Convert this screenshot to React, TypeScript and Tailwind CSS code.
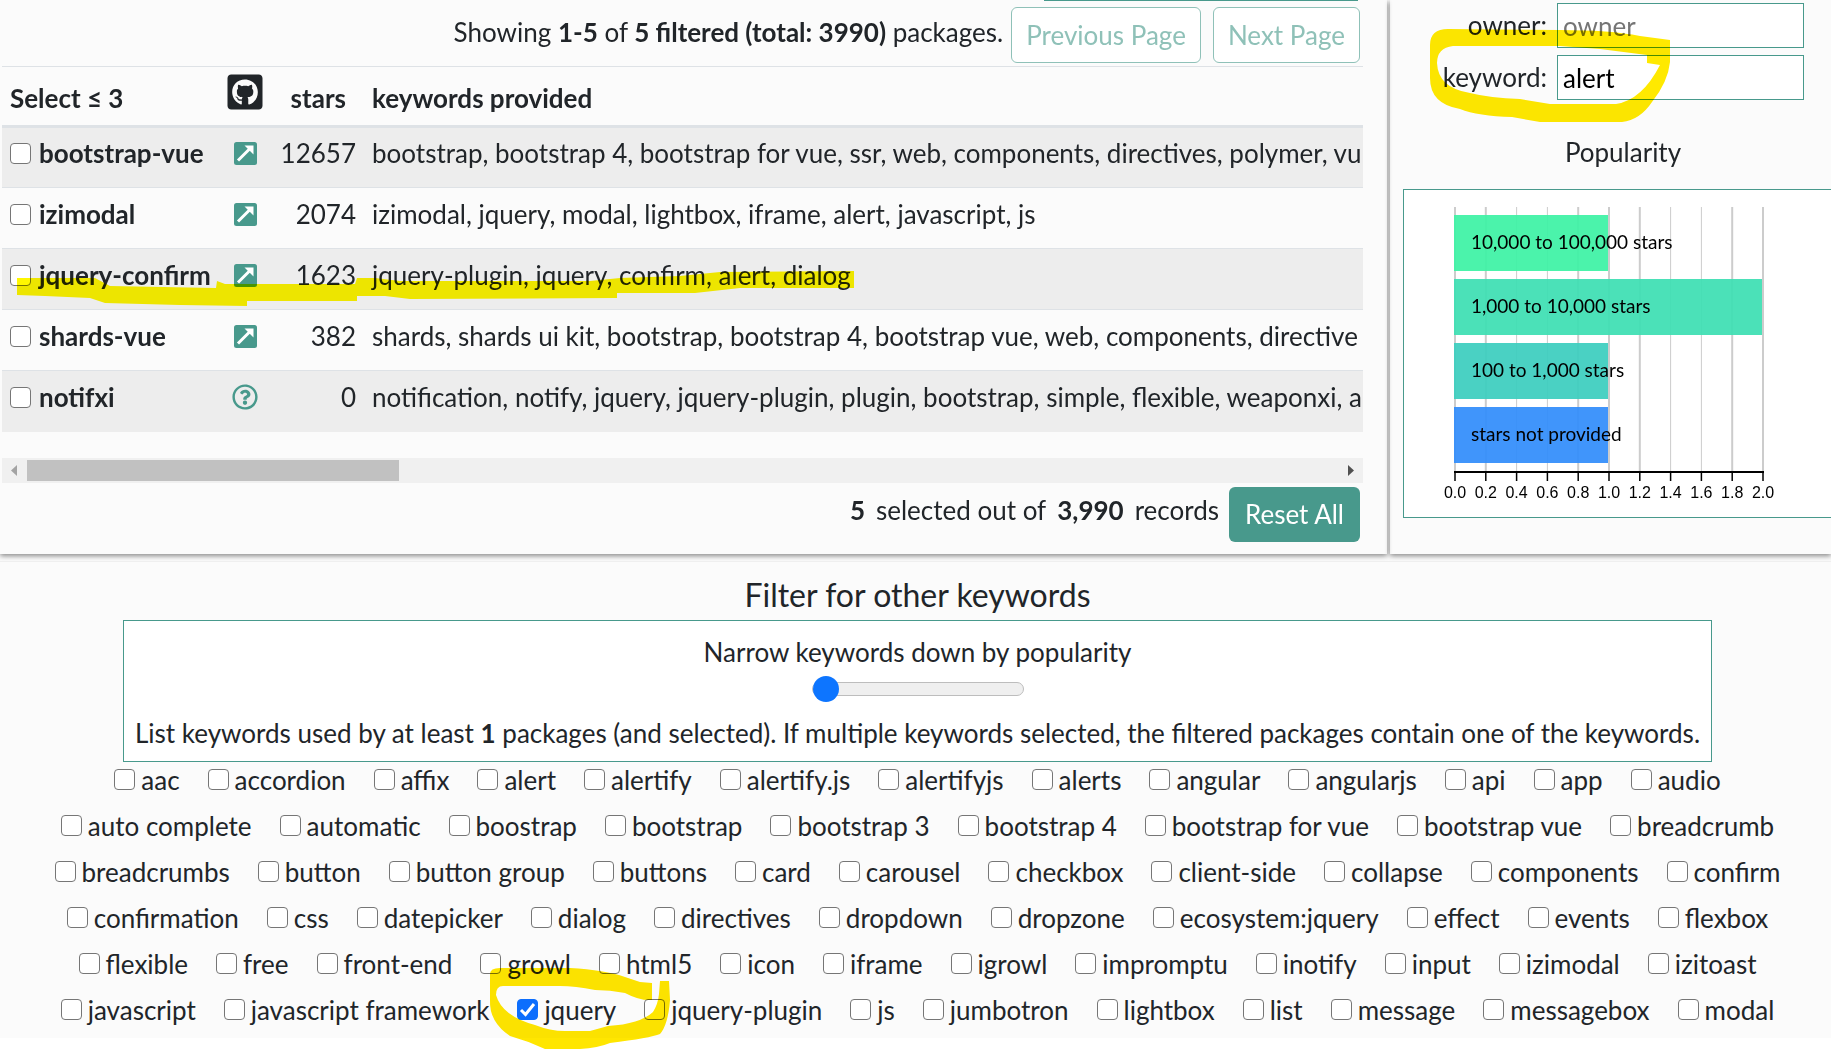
import { useState } from "react";
import { FaGithubSquare, FaRegQuestionCircle } from "react-icons/fa";

const packages = [
  { name: "bootstrap-vue", stars: 12657, linked: true, keywords: "bootstrap, bootstrap 4, bootstrap for vue, ssr, web, components, directives, polymer, vu" },
  { name: "izimodal", stars: 2074, linked: true, keywords: "izimodal, jquery, modal, lightbox, iframe, alert, javascript, js" },
  { name: "jquery-confirm", stars: 1623, linked: true, keywords: "jquery-plugin, jquery, confirm, alert, dialog" },
  { name: "shards-vue", stars: 382, linked: true, keywords: "shards, shards ui kit, bootstrap, bootstrap 4, bootstrap vue, web, components, directive" },
  { name: "notifxi", stars: 0, linked: false, keywords: "notification, notify, jquery, jquery-plugin, plugin, bootstrap, simple, flexible, weaponxi, a" },
];

const keywords = [
  "aac", "accordion", "affix", "alert", "alertify", "alertify.js", "alertifyjs", "alerts", "angular", "angularjs", "api", "app", "audio",
  "auto complete", "automatic", "boostrap", "bootstrap", "bootstrap 3", "bootstrap 4", "bootstrap for vue", "bootstrap vue", "breadcrumb",
  "breadcrumbs", "button", "button group", "buttons", "card", "carousel", "checkbox", "client-side", "collapse", "components", "confirm",
  "confirmation", "css", "datepicker", "dialog", "directives", "dropdown", "dropzone", "ecosystem:jquery", "effect", "events", "flexbox",
  "flexible", "free", "front-end", "growl", "html5", "icon", "iframe", "igrowl", "impromptu", "inotify", "input", "izimodal", "izitoast",
  "javascript", "javascript framework", "jquery", "jquery-plugin", "js", "jumbotron", "lightbox", "list", "message", "messagebox", "modal",
];

const bars = [
  { label: "10,000 to 100,000 stars", value: 1, color: "#3df2a5" },
  { label: "1,000 to 10,000 stars", value: 2, color: "#3ddfb3" },
  { label: "100 to 1,000 stars", value: 1, color: "#3ccdbe" },
  { label: "stars not provided", value: 1, color: "#328dfb" },
];

const checkboxClass =
  "peer size-[21px] appearance-none rounded border border-[#767676] bg-white checked:border-[#0d6efd] checked:bg-[#0d6efd]";

function Checkbox({ id, defaultChecked }: { id: string; defaultChecked?: boolean }) {
  return (
    <span className="relative flex shrink-0">
      <input id={id} type="checkbox" defaultChecked={defaultChecked} className={checkboxClass} />
      <svg viewBox="0 0 21 21" className="pointer-events-none absolute inset-0 hidden size-[21px] peer-checked:block" fill="none" stroke="white" strokeWidth="3">
        <path d="M4 11 L8.5 15.5 L17 5" />
      </svg>
    </span>
  );
}

function LinkIcon() {
  return (
    <svg viewBox="0 0 23 23" className="size-[23px]" aria-hidden="true">
      <rect width="23" height="23" rx="2.5" fill="#48998c" />
      <path d="M4 18.5 L15.5 7" stroke="white" strokeWidth="3" />
      <path d="M10.5 3.5 H19.5 V12.5 L16.5 9.5 L13.5 6.5 Z" fill="white" />
    </svg>
  );
}

function PackageTable() {
  return (
    <div className="overflow-hidden">
      <table className="w-full table-fixed border-collapse text-left whitespace-nowrap">
        <colgroup>
          <col className="w-[219px]" />
          <col className="w-[48px]" />
          <col className="w-[95px]" />
          <col />
        </colgroup>
        <thead>
          <tr className="h-[60px] border-t border-b-[3px] border-t-[#dee2e6] border-b-[#dee2e6]">
            <th className="pt-1 pl-2 font-bold">Select ≤ 3</th>
            <th>
              <FaGithubSquare className="mx-auto mb-2 size-10" aria-label="GitHub" />
            </th>
            <th className="pt-1 pr-[18px] text-right">stars</th>
            <th className="pt-1 pl-2">keywords provided</th>
          </tr>
        </thead>
        <tbody>
          {packages.map((p) => (
            <tr key={p.name} className="h-[61px] border-t border-[#dee2e6] odd:bg-[#ededed]">
              <th className="pb-2 pl-2">
                <span className="flex items-center gap-2">
                  <Checkbox id={`package-${p.name}`} />
                  <label htmlFor={`package-${p.name}`}>{p.name}</label>
                </span>
              </th>
              <td className="pb-2">
                {p.linked ? (
                  <a href="#repository" aria-label={`${p.name} repository`} className="flex justify-center">
                    <LinkIcon />
                  </a>
                ) : (
                  <FaRegQuestionCircle className="mx-auto size-[26px] text-[#48998c]" />
                )}
              </td>
              <td className="pr-2 pb-2 text-right">{p.stars}</td>
              <td className="pb-2 pl-2">{p.keywords}</td>
            </tr>
          ))}
        </tbody>
      </table>
    </div>
  );
}

function ScrollTrack() {
  return (
    <div className="mt-[26px] flex h-[25px] items-center bg-[#f0f0f0]">
      <svg viewBox="0 0 25 25" className="size-[25px]" aria-hidden="true">
        <path d="M15 7 V18 L9 12.5 Z" fill="#a3a3a3" />
      </svg>
      <div className="h-[21px] flex-1">
        <div className="h-full w-[372px] bg-[#c1c1c1]" />
      </div>
      <svg viewBox="0 0 25 25" className="size-[25px]" aria-hidden="true">
        <path d="M10 7 V18 L16 12.5 Z" fill="#505050" />
      </svg>
    </div>
  );
}

function PopularityChart() {
  const ticks = Array.from({ length: 11 }, (_, i) => i);
  return (
    <svg width="400" height="327" viewBox="0 0 400 327" className="block" role="img" aria-label="Packages by number of stars">
      {ticks.map((i) => (
        <line key={i} x1={51 + i * 30.8} x2={51 + i * 30.8} y1="17" y2="282" stroke="#cccccc" strokeWidth={[2, 3, 7, 8].includes(i) ? 1 : 2} />
      ))}
      {bars.map((b, i) => (
        <g key={b.label}>
          <rect x="50" y={25 + i * 64} width={b.value * 154} height="56" fill={b.color} fillOpacity="0.93" />
          <text x="67" y={59 + i * 64} fontSize="19" fill="#000" className="font-['Lato',sans-serif]">
            {b.label}
          </text>
        </g>
      ))}
      <line x1="50" x2="360" y1="282" y2="282" stroke="#000" strokeWidth="2" />
      {ticks.map((i) => (
        <g key={i}>
          <line x1={51 + i * 30.8} x2={51 + i * 30.8} y1="282" y2="291" stroke="#000" strokeWidth="1.5" />
          <text x={51 + i * 30.8} y="308" textAnchor="middle" fontSize="16" fill="#000" className="font-['Liberation_Sans',sans-serif]">
            {(i * 0.2).toFixed(1)}
          </text>
        </g>
      ))}
    </svg>
  );
}

function Marker({ className, viewBox, d, color }: { className: string; viewBox: string; d: string; color: string }) {
  return (
    <svg viewBox={viewBox} className={className} aria-hidden="true">
      <path d={d} fill={color} fillRule="evenodd" />
    </svg>
  );
}

export default function App() {
  const [owner, setOwner] = useState("");
  const [keyword, setKeyword] = useState("alert");
  const inputClass =
    "h-[45px] min-w-0 flex-1 border border-[#48998c] bg-white px-[5px] text-black placeholder:text-[#757575]";
  const pageButtonClass = "h-[56px] rounded-md border border-[#8fc1b8] bg-white px-3.5 text-[#8fc1b8]";

  return (
    <div className="relative isolate min-h-screen bg-white font-['Lato',sans-serif] text-[26px] leading-[39px] text-[#212529]">
      <main className="bg-[#fbfbfb]">
        <div className="flex items-stretch gap-[3px]">
          <section className="min-w-0 flex-1 pr-6 pb-3 pl-0.5 shadow-[0_2px_5px_rgba(0,0,0,0.45)]">
            <div className="flex h-[66px] items-start justify-end pr-[3px]">
              <p className="mt-[13px] mr-2">
                Showing <b>1-5</b> of <b>5 filtered (total: 3990)</b> packages.
              </p>
              <div className="flex gap-3 pt-[7px]">
                <button type="button" className={pageButtonClass}>Previous Page</button>
                <button type="button" className={pageButtonClass}>Next Page</button>
              </div>
            </div>
            <PackageTable />
            <ScrollTrack />
            <div className="mt-1 flex items-start justify-end pr-[3px]">
              <p className="mt-1 mr-2.5 flex gap-[11px]">
                <b>5</b>
                <span>selected out of</span>
                <b>3,990</b>
                <span>records</span>
              </p>
              <button type="button" className="h-[55px] rounded-md bg-[#48998c] px-4 text-white">Reset All</button>
            </div>
          </section>

          <section className="relative w-[441px] shrink-0 overflow-hidden shadow-[0_2px_5px_rgba(0,0,0,0.45)]">
            <div className="flex flex-col gap-[7px] pt-[3px] pr-[27px] pl-[46px]">
              <div className="flex items-center gap-2.5">
                <label htmlFor="owner" className="w-[111px] text-right">owner:</label>
                <input id="owner" type="text" placeholder="owner" value={owner} onChange={(e) => setOwner(e.target.value)} className={inputClass} />
              </div>
              <div className="flex items-center gap-2.5">
                <label htmlFor="keyword" className="w-[111px] text-right">keyword:</label>
                <input id="keyword" type="text" value={keyword} onChange={(e) => setKeyword(e.target.value)} className={inputClass} />
              </div>
            </div>
            <h2 className="mt-[33px] pl-[25px] text-center">Popularity</h2>
            <div className="mt-[17px] -mr-1 ml-[13px] overflow-hidden border border-[#48998c] bg-white">
              <PopularityChart />
            </div>
            <Marker
              className="pointer-events-none absolute top-[28px] left-[38px] h-[96px] w-[242px] mix-blend-multiply"
              viewBox="1428 28 242 96"
              color="#ffe900"
              d="M1430 45 Q1430 29 1448 29 L1560 30 Q1610 30 1640 36 L1670 40 L1670 62 Q1668 82 1652 102 Q1640 120 1622 122 L1540 122 L1512 117 Q1478 116 1460 109 Q1430 104 1430 78 Z M1453 46 Q1437 48 1437 63 Q1438 88 1470 93 Q1490 98 1520 99 L1550 104 L1616 104 Q1642 100 1660 65 L1647 63 L1647 55 L1600 49 L1560 46 Z"
            />
          </section>
          <div className="absolute top-0 right-[473px] h-px w-[314px] bg-[#48998c]" />
        </div>

        <section className="relative mt-[7px] border-t border-[#efefef] bg-[#fbfbfb] pr-5 pb-2.5 pl-6">
          <h2 className="pt-2.5 pb-0.5 text-center text-[32px] leading-[46px]">Filter for other keywords</h2>
          <div className="flex justify-center">
            <div className="flex flex-col items-center border border-[#48998c] bg-white px-[11px] pt-3 pb-2">
              <label htmlFor="popularity">Narrow keywords down by popularity</label>
              <input
                id="popularity"
                type="range"
                min={1}
                max={100}
                defaultValue={1}
                className="mt-1 h-[26px] w-[212px] appearance-none bg-transparent [&::-webkit-slider-runnable-track]:h-[14px] [&::-webkit-slider-runnable-track]:rounded-full [&::-webkit-slider-runnable-track]:border [&::-webkit-slider-runnable-track]:border-[#bdbdbd] [&::-webkit-slider-runnable-track]:bg-[#efefef] [&::-webkit-slider-thumb]:-mt-[7px] [&::-webkit-slider-thumb]:size-[26px] [&::-webkit-slider-thumb]:appearance-none [&::-webkit-slider-thumb]:rounded-full [&::-webkit-slider-thumb]:bg-[#0d75ff]"
              />
              <p className="mt-3">
                List keywords used by at least <b>1</b> packages (and selected). If multiple keywords selected, the filtered packages contain one of the keywords.
              </p>
            </div>
          </div>
          <ul className="flex flex-wrap justify-center gap-x-[28px] gap-y-2.5 leading-9">
            {keywords.map((k) => (
              <li key={k} className="flex h-9 items-center gap-1.5">
                <Checkbox id={`keyword-${k}`} defaultChecked={k === "jquery"} />
                <label htmlFor={`keyword-${k}`}>{k}</label>
              </li>
            ))}
          </ul>
        </section>
      </main>
      <Marker
        className="pointer-events-none absolute top-[967px] left-[489px] h-[83px] w-[182px] mix-blend-multiply"
        viewBox="489 967 182 83"
        color="#ffe600"
        d="M490 974 Q490 968 500 968 L570 968 Q605 970 625 977 L640 982 L652 983 L652 1000 Q640 1001 625 993 Q610 990 595 990 Q575 986 560 986 L503 986 Q496 986 496 995 Q502 1016 535 1025 Q550 1031 565 1031 L590 1031 L608 1026 Q640 1024 653 1012 Q658 1004 659 994 L660 981 L669 981 L670 1000 Q668 1025 660 1034 Q650 1038 610 1043 Q598 1048 580 1049 L545 1049 Q528 1041 510 1036 Q489 1022 490 1000 Z"
      />
      <Marker
        className="pointer-events-none absolute top-[266px] left-[17px] h-[42px] w-[840px] mix-blend-multiply"
        viewBox="17 266 840 42"
        color="#fff700"
        d="M17 278 L95 278 L110 286 L216 288 L217 281 L225 284 L355 284 L357 278 L375 278 L400 281 L590 281 L620 278 L680 276 L720 272 L854 271 L854 288 L740 288 L695 293 L617 293 L617 298 L410 299 L385 296 L357 296 L357 301 L247 301 L247 306 L180 305 L105 303 L90 298 L45 296 L17 295 Z"
      />
    </div>
  );
}
